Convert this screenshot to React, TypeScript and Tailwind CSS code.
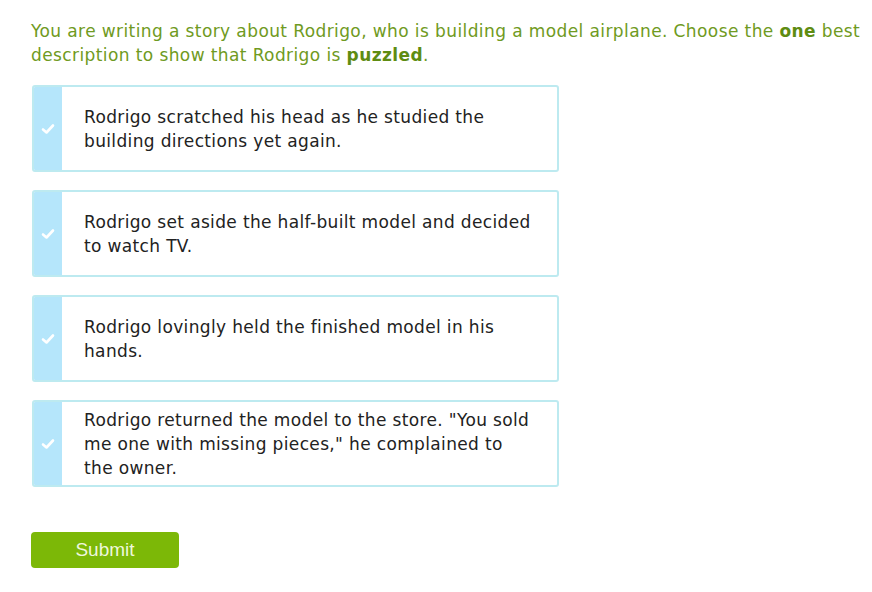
import React from "react";

const options = [
  "Rodrigo scratched his head as he studied the building directions yet again.",
  "Rodrigo set aside the half-built model and decided to watch TV.",
  "Rodrigo lovingly held the finished model in his hands.",
  'Rodrigo returned the model to the store. "You sold me one with missing pieces," he complained to the owner.',
];

function Check() {
  return (
    <svg width="14" height="12" viewBox="0 0 14 12">
      <path d="M2 6.5 L5.5 9.5 L12 2.5" fill="none" stroke="#ffffff" strokeWidth="2.6" strokeLinecap="round" strokeLinejoin="round" />
    </svg>
  );
}

export default function App() {
  return (
    <div className="min-h-[592px] bg-white pl-[31px] pt-[19px]" style={{ fontFamily: '"DejaVu Sans", Verdana, sans-serif' }}>
      <p className="text-[17px] leading-[24px] tracking-[0.4px] text-[#6f9a22] w-[840px]">
        You are writing a story about Rodrigo, who is building a model airplane. Choose the <b className="text-[#5e8c12]">one</b> best description to show that Rodrigo is <b className="text-[#5e8c12]">puzzled</b>.
      </p>
      <div className="mt-[18px] flex flex-col gap-[18px] w-[527px] ml-px">
        {options.map((t, i) => (
          <div key={i} className="flex min-h-[87px] rounded-[3px] border-2 border-[#bdeaf0] overflow-hidden bg-white">
            <div className="w-[28px] shrink-0 bg-[#b5e6fb] flex items-center justify-center">
              <Check />
            </div>
            <div className="flex items-center pl-[22px] pr-[21px] py-[5px] text-[17px] leading-[24px] tracking-[0.35px] text-[#222222]">
              {t}
            </div>
          </div>
        ))}
      </div>
      <button className="mt-[45px] w-[148px] h-[36px] rounded-[4px] bg-[#7cb807] text-[19px] text-[#eef7dc]" style={{ fontFamily: '"Liberation Sans", Arial, sans-serif' }}>
        Submit
      </button>
    </div>
  );
}
